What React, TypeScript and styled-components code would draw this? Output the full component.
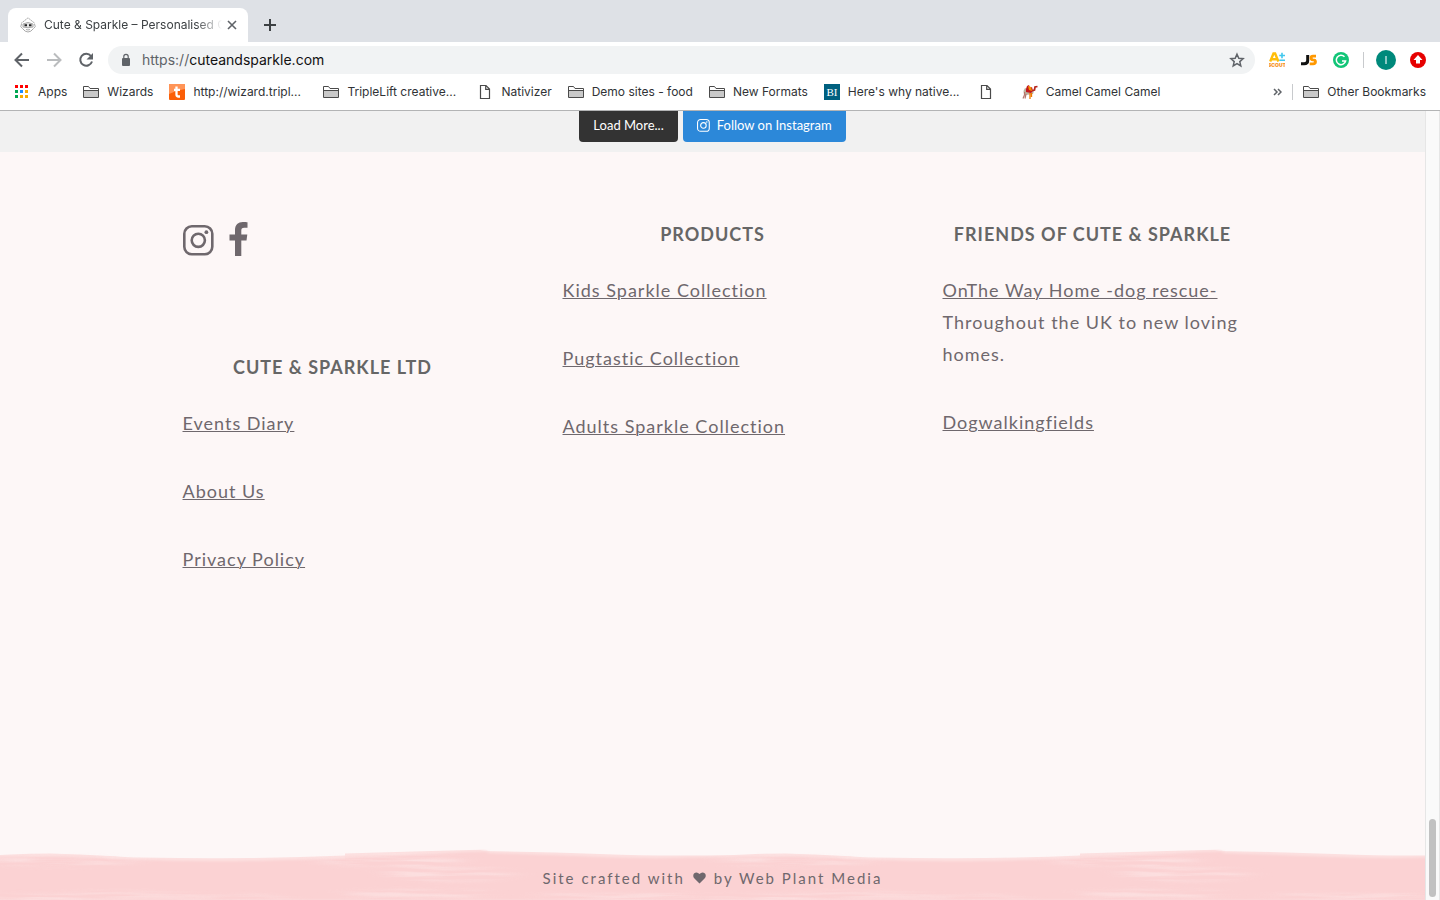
import React from 'react';
import styled, { createGlobalStyle } from 'styled-components';

const Global = createGlobalStyle`
  * { box-sizing: border-box; }
  html, body, #root { height: 100%; margin: 0; }
  body { overflow: hidden; }
`;

const Browser = styled.div`
  display: flex;
  flex-direction: column;
  min-height: 100%;
  background: #fff;
  color: #3c4043;
  font-family: Inter, 'Liberation Sans', sans-serif;
  font-size: 12px;
`;

const TabStrip = styled.div`
  display: flex;
  align-items: flex-end;
  height: 42px;
  padding: 0 8px;
  background: #dee1e6;
`;

const Tab = styled.div`
  display: flex;
  align-items: center;
  width: 240px;
  height: 34px;
  margin-right: 5px;
  padding: 0 8px 0 12px;
  border-radius: 8px 8px 0 0;
  background: #fff;
`;

const TabTitle = styled.span`
  flex: 1;
  min-width: 0;
  margin-left: 8px;
  overflow: hidden;
  white-space: nowrap;
  line-height: 16px;
  mask-image: linear-gradient(90deg, #000 152px, transparent 178px);
`;

const IconButton = styled.button<{ $size?: number }>`
  display: flex;
  align-items: center;
  justify-content: center;
  flex: none;
  width: ${(p) => p.$size ?? 32}px;
  height: ${(p) => p.$size ?? 32}px;
  padding: 0;
  border: 0;
  background: none;
  color: #5f6368;
`;

const Toolbar = styled.div`
  display: flex;
  align-items: center;
  height: 36px;
  padding: 0 6px;
`;

const AddressBar = styled.div`
  display: flex;
  align-items: center;
  flex: 1;
  height: 28px;
  margin: 0 6px;
  padding: 0 4px 0 12px;
  border-radius: 14px;
  background: #f1f3f4;
`;

const Address = styled.div`
  flex: 1;
  margin-left: 10px;
  font-size: 14px;
  line-height: 20px;
  color: #5f6368;
  b { font-weight: 400; color: #111; }
`;

const Divider = styled.span<{ $gap: number }>`
  width: 1px;
  height: 16px;
  margin: 0 ${(p) => p.$gap}px;
  background: #c8cacd;
`;

const Bookmarks = styled.nav`
  display: flex;
  align-items: center;
  gap: 16px;
  height: 32px;
  padding: 0 14px 4px;
`;

const Bookmark = styled.a`
  display: flex;
  align-items: center;
  gap: 8px;
  color: #303336;
  line-height: 16px;
  text-decoration: none;
  white-space: nowrap;
`;

const BookmarkLabel = styled.span<{ $shortened: boolean }>`
  min-width: ${(p) => (p.$shortened ? 114 : 4)}px;
`;

const Overflow = styled.div`
  display: flex;
  align-items: center;
  margin-left: auto;
`;

const Viewport = styled.div`
  display: flex;
  flex: 1;
  border-top: 1px solid #b3b4b5;
`;

const Page = styled.div`
  display: flex;
  flex-direction: column;
  flex: 1;
  background: #fdf7f7;
  color: #6f686d;
  font-family: Lato, sans-serif;
`;

const ScrollTrack = styled.div`
  display: flex;
  align-items: flex-end;
  width: 15px;
  padding: 0 3px 3px;
  border: solid #e6e6e6;
  border-width: 0 1px;
  background: #fafafa;
`;

const ScrollThumb = styled.div`
  width: 8px;
  height: 78px;
  border-radius: 4px;
  background: #c1c1c1;
`;

const Feed = styled.section`
  display: flex;
  justify-content: center;
  align-items: flex-start;
  gap: 5px;
  height: 41px;
  background: #f1f1f1;
`;

const FeedButton = styled.button<{ $color: string }>`
  display: flex;
  align-items: center;
  gap: 7px;
  height: 31px;
  padding: 0 14px 3px;
  border: 0;
  border-radius: 0 0 4px 4px;
  background: ${(p) => p.$color};
  color: #fff;
  font-family: Lato, sans-serif;
  font-size: 13px;
`;

const Columns = styled.footer`
  display: grid;
  grid-template-columns: repeat(3, 1fr);
  gap: 80px;
  width: 100%;
  max-width: 1060px;
  margin: 66px auto auto;
`;

const Social = styled.div`
  display: flex;
  align-items: center;
  gap: 15px;
  height: 44px;
  margin-bottom: 89px;
  a { display: flex; color: #6f686d; }
`;

const Heading = styled.h3`
  margin: 0 0 24px;
  color: #666;
  font-size: 18px;
  font-weight: 700;
  line-height: 32px;
  letter-spacing: 1px;
  text-align: center;
  text-transform: uppercase;
`;

const Entry = styled.p`
  margin: 0 0 36px;
  font-size: 18px;
  line-height: 32px;
  letter-spacing: 1px;
  a { color: inherit; text-underline-offset: 1px; text-decoration-thickness: 1px; }
`;

const CreditBar = styled.div`
  position: relative;
  display: flex;
  align-items: center;
  justify-content: center;
  gap: 8px;
  height: 52px;
  padding-top: 8px;
  font-size: 15px;
  line-height: 20px;
  letter-spacing: 2px;
  span, svg { position: relative; }
`;

const Paint = styled.div`
  position: absolute;
  inset: 0;
  svg { width: 100%; height: 100%; }
`;

const Folder = () => (
  <svg width="16" height="16" viewBox="0 0 16 16" fill="none" stroke="#4a4a4a" aria-hidden="true">
    <path d="M.5 13.500V2.500h5l1.500 2h8.500v9z" fill="#fff" />
    <path d="M1 7h14v6H1z" fill="#c9c9c9" stroke="none" />
    <path d="M.5 6.500h15" />
  </svg>
);

const Doc = () => (
  <svg width="16" height="16" viewBox="0 0 16 16" fill="none" stroke="#4a4a4a" strokeWidth="1.200" aria-hidden="true">
    <path d="M3.500 1.500h5.500l3.500 3.500v9.500h-9zM8.700 1.500v3.800h3.800" />
  </svg>
);

const appColors = ['#f00', '#f00', '#f00', '#00a651', '#1a8cff', '#f9ab00', '#00a651', '#f9ab00', '#f9ab00'];
const Apps = () => (
  <svg width="16" height="16" viewBox="0 0 16 16" aria-hidden="true">
    {appColors.map((c, i) => (
      <rect key={i} x={1 + (i % 3) * 5} y={1 + Math.floor(i / 3) * 5} width="3" height="3" fill={c} />
    ))}
  </svg>
);

const TripleLift = () => (
  <svg width="16" height="16" viewBox="0 0 16 16" aria-hidden="true">
    <rect width="16" height="16" rx="1" fill="#fb5f08" />
    <path d="M0 0h16v5Q8 6 0 10z" fill="#ff9457" />
    <path d="M7.500 2.500v8q0 2 2 2H11M5 5.800h6" fill="none" stroke="#fff" strokeWidth="2.300" />
  </svg>
);

const Insider = () => (
  <svg width="16" height="16" viewBox="0 0 16 16" aria-hidden="true">
    <rect width="16" height="16" fill="#00607f" />
    <text x="8" y="12" textAnchor="middle" fontFamily="Liberation Serif, serif" fontSize="11" fill="#fff">BI</text>
  </svg>
);

const Camel = () => (
  <svg width="16" height="16" viewBox="0 0 16 16" aria-hidden="true">
    <path d="M1.500 7L3 4l2 1 5 1 2 1-1 3-7 1-2-1z" fill="#bcae9c" />
    <path d="M4 5l1-3 2-1 1 3 2-1 1 4-2 2-5-1z" fill="#c4161c" />
    <path d="M6 2l3 1 1 4-3-1z" fill="#f39200" />
    <path d="M10.500 6.500l2-.5.500-3 2.500-.5" fill="none" stroke="#b5231c" strokeWidth="1.700" />
    <path d="M2.500 8v3L1 14.500M4 10l-1 4.500" fill="none" stroke="#b5766c" strokeWidth="1.200" />
    <path d="M8 9v6M9.500 9v4" fill="none" stroke="#f07a00" strokeWidth="1.300" />
  </svg>
);

const Instagram = ({ size }: { size: number }) => (
  <svg width={size} height={size} viewBox="0 0 31 31" fill="none" stroke="currentColor" strokeWidth="2.600" aria-hidden="true">
    <rect x="1.300" y="1.300" width="28" height="28" rx="7.500" />
    <circle cx="15.300" cy="15.300" r="6.600" />
    <circle cx="23.400" cy="7.200" r="1.900" fill="currentColor" stroke="none" />
  </svg>
);

const bookmarks: { icon: React.ReactNode; label: string }[] = [
  { icon: <Apps />, label: 'Apps' },
  { icon: <Folder />, label: 'Wizards' },
  { icon: <TripleLift />, label: 'http://wizard.tripl...' },
  { icon: <Folder />, label: 'TripleLift creative...' },
  { icon: <Doc />, label: 'Nativizer' },
  { icon: <Folder />, label: 'Demo sites - food' },
  { icon: <Folder />, label: 'New Formats' },
  { icon: <Insider />, label: "Here's why native..." },
  { icon: <Doc />, label: '' },
  { icon: <Camel />, label: 'Camel Camel Camel' },
];

/* One painted stroke is 735px wide and repeats across the bar. */
const BrushTile = ({ x }: { x: number }) => (
  <g transform={`translate(${x} 0)`}>
    <path d="M0 5.500Q50 4 105 2.500T135 3Q200 4 255 6T345 7.500Q380 7.500 400 6.500T440 5.500Q470 6 500 8T530 9.500Q590 10.500 640 10T735 7.500V52H0z" fill="#fce0e0" />
    <path d="M0 9Q50 8 105 5T140 5Q200 7 255 9T345 9.500Q390 9 440 8.500T500 11Q590 14 640 13T735 10V52H0z" fill="#fbd2d3" filter="url(#edge)" />
    <g fill="#fdeaea" opacity="0.55" filter="url(#bristles)">
      <ellipse cx="50" cy="13" rx="70" ry="6" />
      <ellipse cx="105" cy="26" rx="60" ry="7" />
      <ellipse cx="70" cy="46" rx="75" ry="4" />
      <ellipse cx="270" cy="48" rx="80" ry="3" />
      <ellipse cx="450" cy="13" rx="70" ry="5" />
      <ellipse cx="420" cy="50" rx="60" ry="4" />
      <ellipse cx="510" cy="47" rx="70" ry="3" />
      <ellipse cx="620" cy="50" rx="60" ry="3" />
    </g>
  </g>
);

export default function App() {
  return (
    <Browser>
      <Global />
      <TabStrip>
        <Tab>
          <svg width="16" height="16" viewBox="0 0 16 16" fill="none" stroke="#aaa" aria-hidden="true">
            <path d="M1 6.500L8 .8l7 5.700" strokeDasharray="2 .6" />
            <path d="M1.500 7Q-.5 10 2.500 11.500 5 15 8 15t5.500-3.500Q16.500 10 14.500 7" />
            <path d="M3 7q5-3 10 0v3q-5 1.500-10 0z" fill="#e4e4e4" />
            <path d="M4.500 8.300h2.500M9 8.300h2.500" stroke="#222" strokeWidth="2" />
            <path d="M6 12.500q2 1 4 0" />
          </svg>
          <TabTitle>Cute &amp; Sparkle – Personalised G</TabTitle>
          <IconButton $size={16} aria-label="Close tab">
            <svg width="10" height="10" viewBox="0 0 10 10" stroke="currentColor" strokeWidth="1.600"><path d="M1 1l8 8M9 1L1 9" /></svg>
          </IconButton>
        </Tab>
        <IconButton $size={34} aria-label="New tab">
          <svg width="12" height="12" viewBox="0 0 12 12" stroke="#3c4043" strokeWidth="2"><path d="M6 0v12M0 6h12" /></svg>
        </IconButton>
      </TabStrip>
      <Toolbar>
        <IconButton aria-label="Back">
          <svg width="16" height="16" viewBox="0 0 16 16" fill="none" stroke="currentColor" strokeWidth="2"><path d="M15 8H2M8 1.500L1.500 8 8 14.500" /></svg>
        </IconButton>
        <IconButton aria-label="Forward">
          <svg width="16" height="16" viewBox="0 0 16 16" fill="none" stroke="#babcbe" strokeWidth="2"><path d="M1 8h13M8 1.500L14.500 8 8 14.500" /></svg>
        </IconButton>
        <IconButton aria-label="Reload">
          <svg width="16" height="16" viewBox="0 0 16 16" fill="none" stroke="currentColor" strokeWidth="2"><path d="M13 4a6 6 0 1 0 1 5.500" /><path d="M15 1v6.500H8.500z" fill="currentColor" stroke="none" /></svg>
        </IconButton>
        <AddressBar>
          <svg width="12" height="14" viewBox="0 0 12 14" aria-hidden="true"><rect x="2" y="5" width="8" height="8" rx="1" fill="#5f6368" /><path d="M3.800 6V3.500a2.200 2.200 0 0 1 4.400 0V6" fill="none" stroke="#5f6368" strokeWidth="1.200" /></svg>
          <Address>https://<b>cuteandsparkle.com</b></Address>
          <IconButton $size={28} aria-label="Bookmark this page">
            <svg width="16" height="16" viewBox="0 0 16 16" fill="none" stroke="currentColor" strokeWidth="1.500"><path d="M8 2.200l1.800 4.100 4.300.4-3.300 2.900 1 4.300L8 11.600l-3.800 2.300 1-4.300-3.300-2.900 4.300-.4z" /></svg>
          </IconButton>
        </AddressBar>
        <IconButton aria-label="A+ Scout">
          <svg width="16" height="16" viewBox="0 0 16 16">
            <path d="M1.200 9.500L4.500 1.500h1.600l3.300 8M3 7.300h4.600" fill="none" stroke="#ffbe0a" strokeWidth="2.400" />
            <path d="M13 .8v5.400M10.300 3.500H16M10.300 8.300H16" stroke="#41c8ee" strokeWidth="1.600" />
            <text x="8" y="15.200" textAnchor="middle" fontFamily="Inter, sans-serif" fontWeight="900" fontSize="5" fill="#f7941d">SCOUT</text>
          </svg>
        </IconButton>
        <IconButton aria-label="Jungle Scout">
          <svg width="16" height="16" viewBox="0 0 16 16" fill="none" strokeWidth="3">
            <path d="M6.700 3v5.500q0 3.300-3.500 3.300H0" stroke="#111" />
            <path d="M15 4.200h-3q-2 0-2 1.700t2 1.900q2.500 0 2.500 2T12 11.900H8.700" stroke="#ff9800" strokeWidth="2.800" />
          </svg>
        </IconButton>
        <IconButton aria-label="Grammarly">
          <svg width="16" height="16" viewBox="0 0 16 16"><circle cx="8" cy="8" r="8" fill="#11c577" /><path d="M11.500 4.800A4.700 4.700 0 1 0 12.600 9H9" fill="none" stroke="#fff" strokeWidth="1.500" /></svg>
        </IconButton>
        <Divider $gap={6} />
        <IconButton aria-label="Profile">
          <svg width="20" height="20" viewBox="0 0 20 20"><circle cx="10" cy="10" r="10" fill="#00897b" /><path d="M10 6v8" stroke="#b8dedb" strokeWidth="1.500" /></svg>
        </IconButton>
        <IconButton aria-label="Update available">
          <svg width="16" height="16" viewBox="0 0 16 16"><circle cx="8" cy="8" r="8" fill="#e60000" /><path d="M8 3l4.500 5H10v3.500H6V8H3.500z" fill="#fff" /></svg>
        </IconButton>
      </Toolbar>
      <Bookmarks>
        {bookmarks.map((b, i) => (
          <Bookmark href="#" key={i} aria-label={b.label || 'Untitled'}>
            {b.icon}
            <BookmarkLabel $shortened={b.label.endsWith('...')}>{b.label}</BookmarkLabel>
          </Bookmark>
        ))}
        <Overflow>
          <svg width="9" height="10" viewBox="0 0 9 10" fill="none" stroke="#5f6368" strokeWidth="1.500" aria-hidden="true"><path d="M1 2l3 3-3 3M5 2l3 3-3 3" /></svg>
          <Divider $gap={10} />
          <Bookmark href="#"><Folder />Other Bookmarks</Bookmark>
        </Overflow>
      </Bookmarks>
      <Viewport>
        <Page>
          <Feed>
            <FeedButton $color="#333">Load More...</FeedButton>
            <FeedButton $color="#2c88d9"><Instagram size={13} />Follow on Instagram</FeedButton>
          </Feed>
          <Columns>
            <section>
              <Social>
                <a href="#" aria-label="Instagram"><Instagram size={31} /></a>
                <a href="#" aria-label="Facebook">
                  <svg width="19" height="36" viewBox="0 0 19 36" fill="currentColor"><path d="M18.500.3v5.500h-3.200c-2.500 0-3 1.200-3 3v3.800h6l-.8 6h-5.200V34H6V18.600H.5v-6H6V8C6 2.800 9.200 0 13.800 0c2.200 0 4.100.2 4.700.3z" /></svg>
                </a>
              </Social>
              <Heading>Cute &amp; Sparkle Ltd</Heading>
              <Entry><a href="#">Events Diary</a></Entry>
              <Entry><a href="#">About Us</a></Entry>
              <Entry><a href="#">Privacy Policy</a></Entry>
            </section>
            <section>
              <Heading>Products</Heading>
              <Entry><a href="#">Kids Sparkle Collection</a></Entry>
              <Entry><a href="#">Pugtastic Collection</a></Entry>
              <Entry><a href="#">Adults Sparkle Collection</a></Entry>
            </section>
            <section>
              <Heading>Friends of Cute &amp; Sparkle</Heading>
              <Entry><a href="#">OnThe Way Home -dog rescue-</a> Throughout the UK to new loving homes.</Entry>
              <Entry><a href="#">Dogwalkingfields</a></Entry>
            </section>
          </Columns>
          <CreditBar>
            <Paint>
              <svg aria-hidden="true">
                <defs>
                  <filter id="edge">
                    <feGaussianBlur stdDeviation="0 1" />
                  </filter>
                  <filter id="bristles" x="-5%" y="-20%" width="110%" height="140%" colorInterpolationFilters="sRGB">
                    <feGaussianBlur in="SourceGraphic" stdDeviation="14 2" result="patch" />
                    <feTurbulence type="fractalNoise" baseFrequency="0.012 0.28" numOctaves="3" seed="4" />
                    <feColorMatrix values="0 0 0 0 1  0 0 0 0 1  0 0 0 0 1  3 0 0 0 -1" result="streaks" />
                    <feComposite in="patch" in2="streaks" operator="in" />
                  </filter>
                </defs>
                <BrushTile x={-390} />
                <BrushTile x={345} />
                <BrushTile x={1080} />
              </svg>
            </Paint>
            <span>Site crafted with</span>
            <svg width="13" height="12" viewBox="0 0 13 12" fill="currentColor" aria-label="love"><path d="M6.500 11.500L1 6Q-.5 3.500 1 1.500 3.800-.8 6.500 2 9.200-.8 12 1.500q1.500 2 0 4.500z" /></svg>
            <span>by Web Plant Media</span>
          </CreditBar>
        </Page>
        <ScrollTrack><ScrollThumb /></ScrollTrack>
      </Viewport>
    </Browser>
  );
}
